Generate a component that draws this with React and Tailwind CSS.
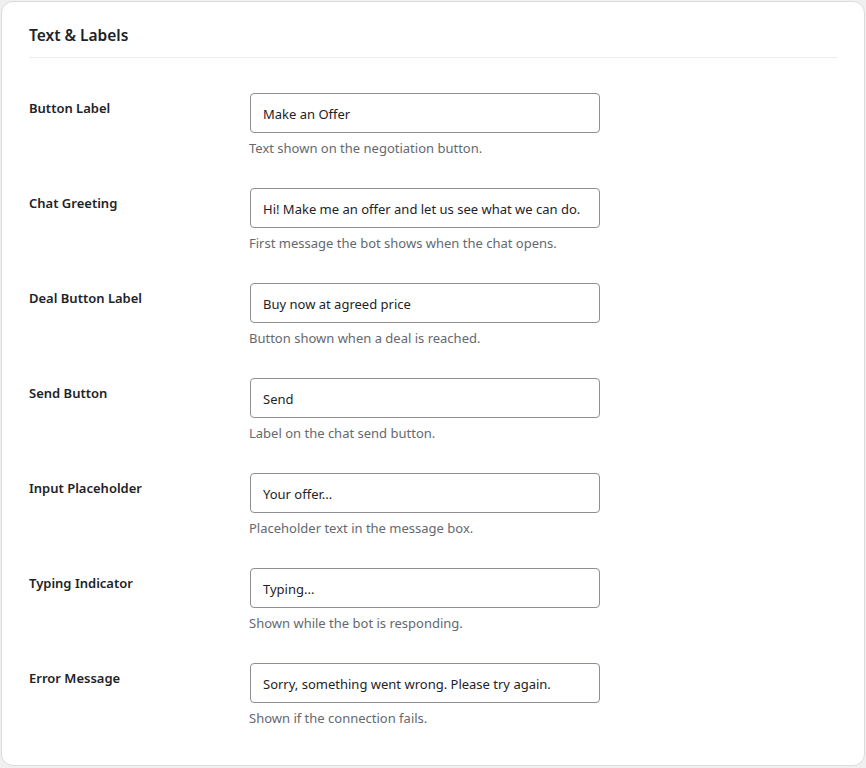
export default function App() {
  const fields = [
    { label: "Button Label", value: "Make an Offer", help: "Text shown on the negotiation button." },
    { label: "Chat Greeting", value: "Hi! Make me an offer and let us see what we can do.", help: "First message the bot shows when the chat opens." },
    { label: "Deal Button Label", value: "Buy now at agreed price", help: "Button shown when a deal is reached." },
    { label: "Send Button", value: "Send", help: "Label on the chat send button." },
    { label: "Input Placeholder", value: "Your offer...", help: "Placeholder text in the message box." },
    { label: "Typing Indicator", value: "Typing...", help: "Shown while the bot is responding." },
    { label: "Error Message", value: "Sorry, something went wrong. Please try again.", help: "Shown if the connection fails." },
  ];

  return (
    <div className="min-h-[768px] bg-[#f0f0f1] p-px font-['Noto_Sans',sans-serif] text-[#1d2327]">
      <div className="h-[765px] rounded-[12px] border border-[#dcdcde] bg-white px-[27px] pt-[23px]">
        <h2 className="border-b border-[#ececec] pb-[11px] text-[15.5px] font-semibold leading-[21px]">
          Text &amp; Labels
        </h2>
        <div className="pt-[20px]">
          {fields.map((f) => (
            <div key={f.label} className="flex h-[95px] pt-[15px]">
              <div className="w-[221px] shrink-0 pt-[7px] text-[13px] font-semibold leading-[17px]">
                {f.label}
              </div>
              <div>
                <input
                  type="text"
                  readOnly
                  value={f.value}
                  className="h-[40px] w-[350px] rounded-[4px] border border-[#8c8f94] bg-white px-[12px] pt-[2px] text-[13px] text-[#1d2327] outline-none"
                />
                <p className="mt-[5px] -ml-px text-[13px] leading-[20px] text-[#646970]">{f.help}</p>
              </div>
            </div>
          ))}
        </div>
      </div>
    </div>
  );
}
